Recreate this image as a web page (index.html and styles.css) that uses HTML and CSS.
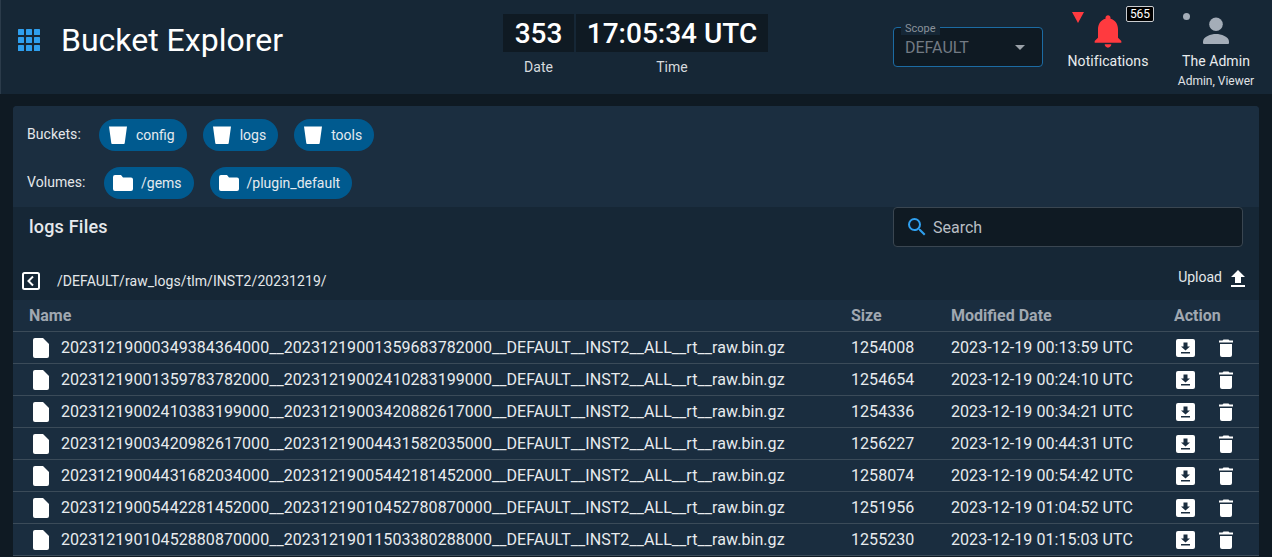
FILE: index.html
```html
<!DOCTYPE html>
<html>
  <head>
    <meta charset="UTF-8" />
    <title>Bucket Explorer</title>
    <link rel="stylesheet" href="styles.css">
  </head>
  <body>
    <header class="app-bar">
      <div class="brand">
        <svg class="apps-icon" viewBox="0 0 22 22" width="22" height="22" fill="#2f9fee">
          <rect x="0" y="0" width="6" height="6" rx="0.6"/><rect x="8" y="0" width="6" height="6" rx="0.6"/><rect x="16" y="0" width="6" height="6" rx="0.6"/>
          <rect x="0" y="8" width="6" height="6" rx="0.6"/><rect x="8" y="8" width="6" height="6" rx="0.6"/><rect x="16" y="8" width="6" height="6" rx="0.6"/>
          <rect x="0" y="16" width="6" height="6" rx="0.6"/><rect x="8" y="16" width="6" height="6" rx="0.6"/><rect x="16" y="16" width="6" height="6" rx="0.6"/>
        </svg>
        <h1>Bucket Explorer</h1>
      </div>

      <div class="clock">
        <div class="clock-col">
          <div class="clock-value date-value">353</div>
          <div class="clock-label">Date</div>
        </div>
        <div class="clock-col">
          <div class="clock-value time-value">17:05:34 UTC</div>
          <div class="clock-label">Time</div>
        </div>
      </div>

      <div class="scope">
        <span class="scope-label">Scope</span>
        <span class="scope-value">DEFAULT</span>
        <span class="scope-caret"></span>
      </div>

      <div class="notifications">
        <span class="astro-triangle"></span>
        <svg class="bell" viewBox="0 0 24 24" width="40" height="40" fill="#ff3a3f">
          <path d="M12 22c1.100 0 2-.9 2-2h-4c0 1.100.9 2 2 2zm6-6v-5c0-3.070-1.630-5.640-4.500-6.320V4c0-.83-.67-1.500-1.500-1.500s-1.500.67-1.500 1.500v.68C7.640 5.360 6 7.920 6 11v5l-2 2v1h16v-1l-2-2z"/>
        </svg>
        <span class="count">565</span>
        <div class="bar-label">Notifications</div>
      </div>

      <div class="user">
        <span class="status-dot"></span>
        <svg class="person" viewBox="0 0 36 36" width="36" height="36" fill="#a4adb8">
          <circle cx="18" cy="10.300" r="6.800"/>
          <path d="M5 27.500C5 22.500 13 20 18 20s13 2.500 13 7.500V29a1 1 0 0 1-1 1H6a1 1 0 0 1-1-1z"/>
        </svg>
        <div class="bar-label">The Admin</div>
        <div class="user-roles">Admin, Viewer</div>
      </div>
    </header>

    <main class="content">
      <section class="sources">
        <div class="chip-row">
          <span class="chip-title">Buckets:</span>
          <a class="chip"><svg class="chip-icon" viewBox="0 0 20 20" width="20" height="20" fill="#fff"><path d="M1 1.500h18l-2.300 16.700a.9.9 0 0 1-.9.800H4.200a.9.9 0 0 1-.9-.8z"/></svg>config</a>
          <a class="chip"><svg class="chip-icon" viewBox="0 0 20 20" width="20" height="20" fill="#fff"><path d="M1 1.500h18l-2.300 16.700a.9.9 0 0 1-.9.800H4.200a.9.9 0 0 1-.9-.8z"/></svg>logs</a>
          <a class="chip"><svg class="chip-icon" viewBox="0 0 20 20" width="20" height="20" fill="#fff"><path d="M1 1.500h18l-2.300 16.700a.9.9 0 0 1-.9.800H4.200a.9.9 0 0 1-.9-.8z"/></svg>tools</a>
        </div>
        <div class="chip-row volumes">
          <span class="chip-title">Volumes:</span>
          <a class="chip"><svg class="chip-icon" viewBox="0 0 20 20" width="20" height="20" fill="#fff"><path d="M2 2h6l2 2.500h8a2 2 0 0 1 2 2V16a2 2 0 0 1-2 2H2a2 2 0 0 1-2-2V4a2 2 0 0 1 2-2z"/></svg>/gems</a>
          <a class="chip"><svg class="chip-icon" viewBox="0 0 20 20" width="20" height="20" fill="#fff"><path d="M2 2h6l2 2.500h8a2 2 0 0 1 2 2V16a2 2 0 0 1-2 2H2a2 2 0 0 1-2-2V4a2 2 0 0 1 2-2z"/></svg>/plugin_default</a>
        </div>
      </section>

      <section class="files-head">
        <div class="title-row">
          <h2>logs Files</h2>
          <div class="search">
            <svg viewBox="0 0 24 24" width="24" height="24" fill="#2f9fee"><path d="M15.500 14h-.79l-.28-.27A6.470 6.470 0 0 0 16 9.500 6.500 6.500 0 1 0 9.500 16c1.610 0 3.090-.59 4.230-1.570l.27.28v.79l5 4.990L20.490 19l-4.990-5zm-6 0C7.010 14 5 11.990 5 9.500S7.010 5 9.500 5 14 7.010 14 9.500 11.990 14 9.500 14z"/></svg>
            <span>Search</span>
          </div>
        </div>
        <div class="path-row">
          <svg class="back-icon" viewBox="0 0 18 18" width="18" height="18"><rect x="1" y="1" width="16" height="16" rx="1.500" fill="none" stroke="#fff" stroke-width="2"/><path d="M11 4.500 6.500 9l4.500 4.500" fill="none" stroke="#fff" stroke-width="2"/></svg>
          <span class="path">/DEFAULT/raw_logs/tlm/INST2/20231219/</span>
          <span class="upload">Upload
            <svg viewBox="0 0 24 24" width="24" height="24" fill="#fff"><path d="M9 16h6v-6h4l-7-7-7 7h4v6zm-4 2h14v2H5v-2z"/></svg>
          </span>
        </div>
      </section>

      <table class="files">
        <thead>
          <tr><th>Name</th><th>Size</th><th>Modified Date</th><th>Action</th></tr>
        </thead>
        <tbody id="rows"></tbody>
      </table>
    </main>

    <script>
      const files = [
        ['20231219000349384364000__20231219001359683782000__DEFAULT__INST2__ALL__rt__raw.bin.gz', '1254008', '2023-12-19 00:13:59 UTC'],
        ['20231219001359783782000__20231219002410283199000__DEFAULT__INST2__ALL__rt__raw.bin.gz', '1254654', '2023-12-19 00:24:10 UTC'],
        ['20231219002410383199000__20231219003420882617000__DEFAULT__INST2__ALL__rt__raw.bin.gz', '1254336', '2023-12-19 00:34:21 UTC'],
        ['20231219003420982617000__20231219004431582035000__DEFAULT__INST2__ALL__rt__raw.bin.gz', '1256227', '2023-12-19 00:44:31 UTC'],
        ['20231219004431682034000__20231219005442181452000__DEFAULT__INST2__ALL__rt__raw.bin.gz', '1258074', '2023-12-19 00:54:42 UTC'],
        ['20231219005442281452000__20231219010452780870000__DEFAULT__INST2__ALL__rt__raw.bin.gz', '1251956', '2023-12-19 01:04:52 UTC'],
        ['20231219010452880870000__20231219011503380288000__DEFAULT__INST2__ALL__rt__raw.bin.gz', '1255230', '2023-12-19 01:15:03 UTC']
      ];

      const fileIcon = '<svg class="file-icon" viewBox="0 0 16 20" width="16" height="20" fill="#fff"><path d="M2 0h8l6 6v12a2 2 0 0 1-2 2H2a2 2 0 0 1-2-2V2a2 2 0 0 1 2-2z"/></svg>';
      const downloadIcon = '<svg viewBox="0 0 19 18" width="19" height="18"><rect width="19" height="18" rx="2" fill="#fff"/><path d="M7.500 3.500h4v4H14L9.500 11.500 5 7.500h2.500zM5 13h9v1.500H5z" fill="#1a2d3f"/></svg>';
      const trashIcon = '<svg viewBox="0 0 14 18" width="14" height="18" fill="#fff"><path d="M1 5h12v11a2 2 0 0 1-2 2H3a2 2 0 0 1-2-2zM0 1.500h3.500l1-1h5l1 1H14V3.500H0z"/></svg>';

      const rows = document.getElementById('rows');
      files.forEach(file => {
        const row = document.createElement('tr');
        row.innerHTML = `<td class="name-cell"><div class="name-wrap">${fileIcon}<span>${file[0]}</span></div></td>
          <td>${file[1]}</td><td>${file[2]}</td>
          <td><div class="actions">${downloadIcon}${trashIcon}</div></td>`;
        rows.appendChild(row);
      });
    </script>
  </body>
</html>
```

FILE: styles.css
```css
* {
  box-sizing: border-box;
}

html,
body {
  height: 100%;
  overflow: hidden;
}

body {
  margin: 0;
  background-color: #0f1a23;
  color: #fff;
  font-family: Roboto, "Noto Sans", sans-serif;
}

.app-bar {
  display: flex;
  align-items: flex-start;
  height: 94px;
  background-color: #162736;
  border-left: 1px solid #2b3b4a;
}

.brand {
  display: flex;
  align-items: center;
  width: 502px;
  padding: 29px 0 0 17px;
}

.brand h1 {
  margin: 0 0 0 21px;
  font-size: 32px;
  font-weight: 400;
  line-height: 22px;
  color: #fff;
}

.clock {
  display: flex;
  gap: 2px;
  margin-top: 14px;
  width: 390px;
}

.clock-value {
  display: flex;
  align-items: center;
  justify-content: center;
  height: 38px;
  background-color: #0f1a23;
  font-size: 28px;
  font-weight: 500;
}

.date-value {
  width: 71px;
}

.time-value {
  width: 192px;
}

.clock-label {
  margin-top: 7px;
  text-align: center;
  font-size: 14px;
  line-height: 16px;
  color: #d6dade;
}

.scope {
  position: relative;
  width: 150px;
  height: 40px;
  margin-top: 27px;
  padding: 13px 11px 0;
  background-color: #0f1a23;
  border: 1px solid #1c6ba3;
  border-radius: 4px;
}

.scope-label {
  position: absolute;
  top: -5px;
  left: 7px;
  padding: 0 4px;
  background-color: #162736;
  font-size: 11px;
  line-height: 12px;
  color: #8a929a;
}

.scope-value {
  font-size: 16px;
  line-height: 14px;
  display: block;
  color: #737b84;
}

.scope-caret {
  position: absolute;
  top: 17px;
  right: 17px;
  border-left: 5px solid transparent;
  border-right: 5px solid transparent;
  border-top: 5px solid #9aa1a8;
}

.notifications {
  position: relative;
  width: 100px;
  margin-left: 15px;
  text-align: center;
  padding-top: 11px;
}

.bell,
.person {
  display: block;
  margin: 0 auto;
}

.person {
  margin-top: 2px;
}

.astro-triangle {
  position: absolute;
  top: 12px;
  left: 14px;
  border-left: 6px solid transparent;
  border-right: 6px solid transparent;
  border-top: 11px solid #ff3a3f;
}

.count {
  position: absolute;
  top: 6px;
  right: 4px;
  width: 28px;
  height: 16px;
  background-color: #000;
  border: 1px solid #c9ccd0;
  border-radius: 2px;
  font-size: 12px;
  line-height: 14px;
  text-align: center;
}

.bar-label {
  margin-top: 2px;
  font-size: 14px;
  line-height: 17px;
  letter-spacing: 0.06px;
  color: #e9ecee;
}

.user .bar-label {
  margin-top: 3px;
}

.user {
  position: relative;
  width: 90px;
  margin-left: 13px;
  text-align: center;
  padding-top: 12px;
}

.status-dot {
  position: absolute;
  top: 13px;
  left: 12px;
  width: 7px;
  height: 7px;
  border-radius: 50%;
  background-color: #a4adb8;
}

.user-roles {
  margin-top: 5px;
  margin-left: -5px;
  margin-right: -5px;
  font-size: 12px;
  line-height: 13px;
  color: #e0e3e6;
  white-space: nowrap;
}

.content {
  margin: 12px 13px 0;
  border-radius: 4px 4px 0 0;
  overflow: hidden;
  background-color: #1a2d3f;
}

.sources {
  height: 101px;
  padding: 13px 16px 0 14px;
  background-color: #1b2e40;
}

.chip-row {
  display: flex;
  align-items: center;
  height: 32px;
  font-size: 14px;
}

.volumes {
  margin-top: 16px;
}

.chip-title {
  width: 72px;
  margin-top: -2px;
  color: #e4e7ea;
  letter-spacing: 0.06px;
}

.volumes .chip-title {
  width: 77px;
}

.chip {
  display: flex;
  align-items: center;
  height: 32px;
  margin-right: 16px;
  padding: 0 12px 0 9px;
  border-radius: 16px;
  background-color: #005a8f;
  color: #e4eaf0;
}

.chip-icon {
  margin-right: 8px;
}

.files-head {
  height: 93px;
  background-color: #162736;
}

.title-row {
  display: flex;
  align-items: flex-start;
  justify-content: space-between;
  padding: 0 16px 0 16px;
}

.title-row h2 {
  margin: 10px 0 0;
  font-size: 18px;
  font-weight: 500;
  line-height: 20px;
  color: #e6e9ec;
  letter-spacing: 0.2px;
}

.search {
  display: flex;
  align-items: center;
  width: 350px;
  height: 40px;
  padding-left: 11px;
  gap: 4px;
  background-color: #0f1a23;
  border: 1px solid #3a4651;
  border-radius: 4px;
  font-size: 16px;
  color: #b9bec3;
}

.path-row {
  display: flex;
  align-items: center;
  height: 28px;
  margin-top: 20px;
  padding: 0 9px;
}

.back-icon {
  flex: none;
}

.path {
  margin-left: 17px;
  font-size: 14px;
  color: #e4e7ea;
  letter-spacing: 0.06px;
}

.upload {
  display: flex;
  align-items: center;
  gap: 4px;
  margin-left: auto;
  margin-top: -8px;
  font-size: 14px;
  color: #e4e7ea;
}

.upload svg {
  margin-top: 3px;
}

.files {
  width: 100%;
  border-collapse: collapse;
  table-layout: fixed;
  background-color: #1a2d3f;
}

.files th {
  height: 31px;
  padding: 0 0 0 16px;
  text-align: left;
  font-size: 16px;
  font-weight: 700;
  color: #a0a8b1;
  border-bottom: 1px solid #3b4b59;
}

.files th:nth-child(1) {
  width: 822px;
}

.files th:nth-child(2) {
  width: 100px;
}

.files th:nth-child(3) {
  width: 223px;
}

.files td {
  height: 32px;
  padding: 0 0 0 16px;
  font-size: 16px;
  color: #e8ebee;
  letter-spacing: 0.06px;
  border-bottom: 1px solid #3b4b59;
  white-space: nowrap;
}

.name-wrap {
  display: flex;
  align-items: center;
  gap: 12px;
  padding-left: 4px;
}

.file-icon {
  flex: none;
  margin-top: 2px;
}

.actions {
  display: flex;
  align-items: center;
  gap: 24px;
  padding-left: 2px;
  padding-top: 2px;
}
```
